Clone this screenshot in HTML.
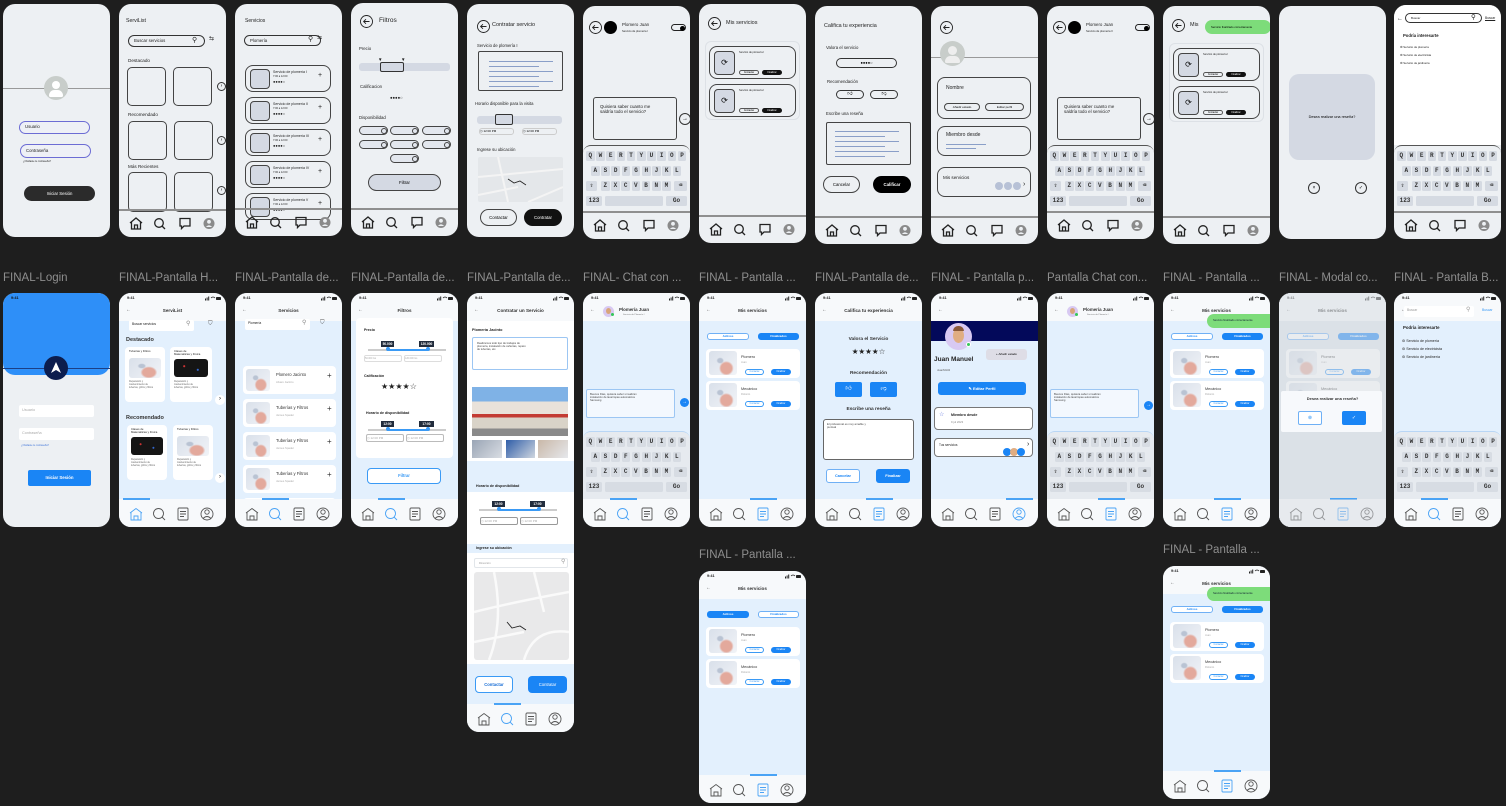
<!DOCTYPE html>
<html><head><meta charset="utf-8">
<style>
html,body{margin:0;padding:0;background:#1e1e1e;width:1506px;height:806px;overflow:hidden;font-family:"Liberation Sans",sans-serif}
.a{position:absolute;box-sizing:border-box;white-space:nowrap}
.fr{position:absolute;overflow:hidden;border-radius:12px;box-sizing:border-box}
.w{background:#edf0f3}
.f{background:#e3f0fd}
.lbl{position:absolute;color:#8e8e8e;font-size:11.5px;white-space:nowrap}
.k{position:absolute;font-family:"Liberation Mono",monospace;font-weight:bold;font-size:6px;color:#333;text-align:center;line-height:10px;height:10px;border-radius:1.5px}
</style></head><body><div id="root"></div>
<script>
function e(x,y,w,h,css,t){return `<div class=a style="left:${x}px;top:${y}px;width:${w}px;height:${h}px;${css||''}">${t||''}</div>`}
function t(x,y,txt,fs,css){return `<div class=a style="left:${x}px;top:${y}px;font-size:${fs}px;line-height:1.15;color:#222;${css||''}">${txt}</div>`}
function c(y,txt,fs,css){return `<div class=a style="left:0;top:${y}px;width:107px;text-align:center;font-size:${fs}px;color:#222;${css||''}">${txt}</div>`}
function frame(x,y,h,cls,inner){return `<div class="fr ${cls}" style="left:${x}px;top:${y}px;width:107px;height:${h}px">${inner}</div>`}
function img(x,y,w,h){return e(x,y,w,h,'border-radius:3px;background:radial-gradient(ellipse at 62% 72%,#e3a99c 0 22%,transparent 30%),radial-gradient(ellipse at 40% 40%,#b9c3d3 0 10%,transparent 16%),linear-gradient(135deg,#d9e0ea,#f1f3f7)')}
function wnav(h){
 let s=`<div class=a style="left:0;top:${h-28}px;width:107px;height:2px;background:#8f8f8f"></div>`;
 s+=`<svg class=a style="left:0;top:${h-23}px" width="107" height="20" viewBox="0 0 107 20" fill="none" stroke="#222" stroke-width="1.3">
 <path d="M11 9 L17 4 L23 9 M12.5 8 V15 H21.5 V8 M15.5 15 V11 H18.5 V15"/>
 <circle cx="40" cy="9" r="4.3"/><path d="M43 12 L46 15"/>
 <path d="M61 4.5 H71 V12 H65 L62.5 14.5 V12 H61 Z"/>
 <circle cx="90" cy="9.5" r="5.5" fill="#8a8a8a" stroke="none"/><circle cx="90" cy="7.8" r="1.9" fill="#edf0f3" stroke="none"/><path d="M86.8 13 Q90 9.5 93.2 13" fill="#edf0f3" stroke="none"/></svg>`;
 return s}
function fnav(h,act){
 let cols=[0,1,2,3].map(i=>i==act?'#4aa3f5':'#555');
 let xs=[17,40,64,88];
 let s=`<div class=a style="left:0;top:${h-28}px;width:107px;height:28px;background:#f7f9fb"></div>`;
 if(act>=0)s+=`<div class=a style="left:${xs[act]-13}px;top:${h-29}px;width:27px;height:2px;background:#4aa3f5"></div>`;
 s+=`<svg class=a style="left:0;top:${h-22}px" width="107" height="18" viewBox="0 0 107 18" fill="none" stroke-width="0.9">
 <path stroke="${cols[0]}" d="M11 8 L17 3.5 L23 8 M12 7.5 V15 H22 V7.5 M15 15 V11 H19 V15"/>
 <circle stroke="${cols[1]}" cx="39.5" cy="8.5" r="5"/><path stroke="${cols[1]}" d="M43 12 L46 15"/>
 <rect stroke="${cols[2]}" x="59" y="3" width="10" height="12" rx="1"/><path stroke="${cols[2]}" d="M61 6.5 H67 M61 9 H67 M61 11.5 H65"/>
 <circle stroke="${cols[3]}" cx="88" cy="9" r="6"/><circle stroke="${cols[3]}" cx="88" cy="7" r="2.2"/><path stroke="${cols[3]}" d="M84 13.5 Q88 9.5 92 13.5"/></svg>`;
 return s}
function kb(y,fin){
 let bg=fin?'#e6eaef':'#edf0f3', kc=fin?'#d7dce3':'#d5dae2';
 let s=e(0,y,107,70,`background:${bg};border-top:1px solid ${fin?'#b9d6f5':'#555'};border-radius:8px 8px 0 0`);
 let r1='QWERTYUIOP',r2='ASDFGHJKL',r3='ZXCVBNM';
 for(let i=0;i<10;i++)s+=`<div class=k style="left:${3+i*10.2}px;top:${y+6}px;width:8.5px;background:${kc}">${r1[i]}</div>`;
 for(let i=0;i<9;i++)s+=`<div class=k style="left:${8+i*10.2}px;top:${y+21}px;width:8.5px;background:${kc}">${r2[i]}</div>`;
 s+=`<div class=k style="left:3px;top:${y+36}px;width:11px;background:${kc}">⇧</div>`;
 for(let i=0;i<7;i++)s+=`<div class=k style="left:${18+i*10.2}px;top:${y+36}px;width:8.5px;background:${kc}">${r3[i]}</div>`;
 s+=`<div class=k style="left:91px;top:${y+36}px;width:13px;background:${kc}">⌫</div>`;
 s+=`<div class=k style="left:3px;top:${y+51}px;width:16px;background:${kc}">123</div>`;
 s+=`<div class=k style="left:22px;top:${y+51}px;width:58px;background:${kc}"></div>`;
 s+=`<div class=k style="left:83px;top:${y+51}px;width:21px;background:${kc}">Go</div>`;
 return s}
function back(x,y){return `<svg class=a style="left:${x}px;top:${y}px" width="13" height="13" viewBox="0 0 13 13" fill="none" stroke="#222" stroke-width="0.9"><circle cx="6.5" cy="6.5" r="6"/><path d="M9.5 6.5 H3.8 M6 4.2 L3.6 6.5 L6 8.8"/></svg>`}
function fhead(title,extra){
 return e(0,0,107,28,'background:#f7f9fb')+t(8,3,'9:41',3.8,'font-weight:bold')+
 `<svg class=a style="left:86px;top:3px" width="16" height="5"><rect x="0" y="2.5" width="1" height="2" fill="#222"/><rect x="1.6" y="1.5" width="1" height="3" fill="#222"/><rect x="3.2" y="0.5" width="1" height="4" fill="#222"/><path d="M6 2 Q8 0 10 2" stroke="#222" fill="none" stroke-width="0.8"/><rect x="11" y="1" width="5" height="3" rx="0.8" fill="#222"/></svg>`+
 t(7,15,'←',5,'color:#555')+(title?c(15,title,4.6,'font-weight:bold;color:#333'):'')+(extra||'')}
let R='';
const G='#222';
// ===== TOP ROW (wireframes) =====
// F1 login
R+=frame(3,4,233,'w',
 e(0,84,107,1,'background:#999')+e(41,72,24,24,'border-radius:50%;background:#c8cdca')+
 e(49,77,8,8,'border-radius:50%;background:#fff')+e(46,86,14,7,'border-radius:7px 7px 2px 2px;background:#fff')+
 e(16,117,71,13,'border:1px solid #6c6cd4;border-radius:7px;background:#eef0f6',t(5,3,'Usuario',4.3))+
 e(17,140,71,14,'border:1px solid #6c6cd4;border-radius:7px;background:#eef0f6',t(5,3.5,'Contraseña',4.3))+
 t(20,157,'¿Olvidaste tu contraseña?',2.4)+
 e(21,182,71,15,'background:#2b2b2b;border-radius:8px;color:#fff;font-size:4.3px;text-align:center;line-height:15px','Iniciar Sesión'));
// F2 home
function circ(x,y){return e(x,y,9,9,'border:1px solid #333;border-radius:50%;font-size:5px;text-align:center;line-height:7px',"›")}
R+=frame(119,4,233,'w',
 t(7,15,'ServiList',5.2)+e(9,31,77,12,'border:1px solid #333;border-radius:7px',t(5,3,'Buscar servicios',4.3)+t(63,1,'⚲',7))+t(90,32,'⇆',6)+
 t(9,54,'Destacado',4.6)+e(8,63,39,39,'border:1px solid #444;border-radius:5px')+e(54,63,39,39,'border:1px solid #444;border-radius:5px')+circ(98,78)+
 t(9,108,'Recomendado',4.6)+e(9,117,39,39,'border:1px solid #444;border-radius:5px')+e(55,117,39,39,'border:1px solid #444;border-radius:5px')+circ(98,132)+
 t(9,160,'Más Recientes',4.6)+e(9,168,39,40,'border:1px solid #444;border-radius:5px')+e(55,168,39,40,'border:1px solid #444;border-radius:5px')+circ(98,182)+
 wnav(233));
// F3 servicios
let f3=t(10,15,'Servicios',5)+e(9,31,77,11,'border:1px solid #333;border-radius:7px',t(5,2.5,'Plomería',4.3)+t(63,0,'⚲',7))+t(82,31,'⇆',6);
['I','II','III','IV','V'].forEach((n,i)=>{let y=61+i*32;f3+=e(10,y,86,27,'border:1px solid #444;border-radius:8px',
 e(4,3,20,20,'background:#d4d9e3;border:1px solid #444;border-radius:4px')+t(27,4,'Servicio de plomería '+n,3.5)+t(27,10,'7:00 a 12:00',2.6)+t(27,14,'●●●●○',4)+t(72,6,'+',7))});
R+=frame(235,4,232,'w',f3+wnav(232));
// F4 filtros
let tg=(x,y)=>e(x,y,29,9,'border:1px solid #444;border-radius:5px;background:#e3e7ee',e(21,1,6,6,'border:1px solid #444;border-radius:50%'));
R+=frame(351,3,233,'w',back(9,12)+t(28,14,'Filtros',6.5)+t(8,44,'Precio',4.3)+e(8,60,91,8,'background:#d4d9e3;border-radius:3px')+
 e(29,59,24,10,'border:1px solid #333;border-radius:2px;background:#d4d9e3')+t(27,54,'▼',4.5)+t(50,54,'▼',4.5)+
 t(9,82,'Calificacion',4.3)+t(39,93,'●●●●○',4.2)+t(8,113,'Disponibilidad',4.3)+
 tg(8,123)+tg(39,123)+tg(71,123)+tg(8,137)+tg(39,137)+tg(71,137)+tg(39,151)+
 e(17,171,73,17,'border:1px solid #444;border-radius:9px;background:#d4d9e3;font-size:4.3px;text-align:center;line-height:15px','Filtrar')+wnav(233));
// F5 contratar
let lines='';for(let i=0;i<6;i++)lines+=e(10,9+i*5,i%2?50:64,1,'background:#8a9fc8');
R+=frame(467,4,233,'w',back(10,16)+t(25,18,'Contratar servicio',5.5)+t(10,40,'Servicio de plomería I',4.2)+
 e(11,47,85,40,'border:1px solid #444;border-radius:2px',lines)+t(8,98,'Horario disponible para la visita',4.2)+
 e(10,112,85,8,'background:#d4d9e3;border-radius:3px')+e(28,110,18,11,'border:1px solid #333;border-radius:2px;background:#d4d9e3')+
 e(12,124,35,7,'border:1px solid #ccc;border-radius:3px;font-size:3px;line-height:5px',' ◷ 12:00 PM')+e(55,124,35,7,'border:1px solid #ccc;border-radius:3px;font-size:3px;line-height:5px',' ◷ 12:00 PM')+
 t(10,144,'Ingrese su ubicación',4.2)+e(11,153,85,45,'background:#e4e7ea;border-radius:2px',`<svg width="85" height="45"><path d="M0 20 L85 12 M20 0 L30 45 M50 45 L85 30 M0 38 L40 30" stroke="#f4f4f4" stroke-width="2" fill="none"/><path d="M30 22 L36 26 L42 24 L48 28" stroke="#222" fill="none" stroke-width="0.8"/></svg>`)+
 e(13,205,37,17,'border:1px solid #444;border-radius:9px;font-size:4.3px;text-align:center;line-height:15px','Contactar')+
 e(57,205,38,17,'background:#111;border-radius:9px;color:#fff;font-size:4.3px;text-align:center;line-height:17px','Contratar'));
// chat wire
function wchat(x,y,sub){return frame(x,y,233,'w',back(6,15)+e(21,15,13,13,'background:#000;border-radius:50%')+t(39,16,'Plomero Juan',4.4)+t(39,24,sub,2.7)+
 e(88,18,15,7,'border:1px solid #222;border-radius:4px',e(8,0.5,5,5,'background:#000;border-radius:50%'))+
 e(10,91,84,43,'border:1px solid #444;border-radius:3px',t(6,6,'Quisiera saber cuanto me<br>saldría todo el servicio?',4.4))+
 e(96,107,12,12,'border:1px solid #333;border-radius:50%;font-size:6px;text-align:center;line-height:10px','→')+kb(139,false)+wnav(233))}
R+=wchat(583,6,'Servicio de plomería I');
R+=wchat(1047,6,'Servicio de plomería II');
// mis servicios wire
function wcard(x,y){return e(x,y,87,33,'border:1px solid #444;border-radius:8px',e(4,4,21,24,'background:#d4d9e3;border:1px solid #444;border-radius:4px;font-size:8px;text-align:center;line-height:22px','⟳')+
 t(29,5,'Servicio de plomería I',2.6)+e(29,23,20,5,'border:1px solid #555;border-radius:3px;font-size:2.4px;text-align:center;line-height:3px','Contactar')+e(52,23,20,5,'background:#111;border-radius:3px;color:#fff;font-size:2.4px;text-align:center;line-height:5px','Finalizar'))}
R+=frame(699,4,239,'w',back(9,13)+t(27,16,'Mis servicios',5.5)+e(6,37,95,79,'border:1px solid #dde1e6;border-radius:6px')+wcard(10,42)+wcard(10,80)+wnav(239));
R+=frame(1163,6,238,'w',back(9,13)+t(27,16,'Mis',5.5)+e(6,37,95,79,'border:1px solid #dde1e6;border-radius:6px')+wcard(10,42)+wcard(10,80)+
 e(42,14,66,14,'background:#7ddc7a;border-radius:7px;font-size:2.8px;line-height:14px;padding-left:6px','Servicio finalizado correctamente')+wnav(238));
// califica wire
let l8='';for(let i=0;i<6;i++)l8+=e(8,8+i*5,i%2?50:64,1,'background:#8a9fc8');
R+=frame(815,6,238,'w',t(9,17,'Califica tu experiencia',5.4)+t(11,40,'Valora el servicio',4.3)+
 e(21,52,61,10,'border:1px solid #333;border-radius:5px;font-size:4px;text-align:center;line-height:8px','●●●●○')+
 t(12,74,'Recomendación',4.3)+e(21,84,28,9,'border:1px solid #333;border-radius:5px;font-size:5px;text-align:center;line-height:7px','👍︎')+e(55,84,28,9,'border:1px solid #333;border-radius:5px;font-size:5px;text-align:center;line-height:7px','👎︎')+
 t(11,106,'Escribe una reseña',4.3)+e(11,116,85,43,'border:1px solid #444;border-radius:2px',l8)+
 e(8,170,37,17,'border:1px solid #444;border-radius:9px;font-size:4.3px;text-align:center;line-height:15px','Cancelar')+
 e(58,170,38,17,'background:#000;border-radius:9px;color:#fff;font-weight:bold;font-size:4.3px;text-align:center;line-height:17px','Calificar')+wnav(238));
// perfil wire
R+=frame(931,6,238,'w',back(9,15)+e(0,51,107,1,'background:#999')+e(9,35,25,25,'border-radius:50%;background:#c8cdca')+e(17,40,9,9,'border-radius:50%;background:#eee')+e(14,50,15,7,'border-radius:7px 7px 2px 2px;background:#eee')+
 e(6,71,94,42,'border:1px solid #444;border-radius:8px',t(8,8,'Nombre',5)+e(6,25,36,8,'border:1px solid #444;border-radius:4px;font-size:3px;text-align:center;line-height:6px','Añadir estado')+e(47,25,39,8,'border:1px solid #444;border-radius:4px;font-size:3px;text-align:center;line-height:6px','Editar perfil'))+
 e(6,120,94,30,'border:1px solid #444;border-radius:8px',t(8,6,'Miembro desde',5)+e(8,17,40,1,'background:#8a9fc8')+e(8,21,30,1,'background:#8a9fc8'))+
 e(6,161,94,30,'border:1px solid #444;border-radius:8px',t(5,7,'Mis servicios',4.6)+e(57,14,8,8,'background:#b7c1d6;border-radius:50%')+e(66,14,8,8,'background:#b7c1d6;border-radius:50%')+e(75,14,8,8,'background:#b7c1d6;border-radius:50%')+t(85,13,'›',7))+wnav(238));
// modal wire
R+=frame(1279,6,233,'w',e(10,68,86,86,'background:#d4d9e3;border-radius:10px;font-size:3.8px;text-align:center;line-height:86px','Desea realizar una reseña?')+
 e(29,176,12,12,'border:1px solid #333;border-radius:50%;font-size:5px;text-align:center;line-height:10px','×')+e(76,176,12,12,'border:1px solid #333;border-radius:50%;font-size:5px;text-align:center;line-height:10px','✓'));
// buscar wire
R+=frame(1394,5,234,'w',e(0,0,107,140,'background:#fff')+t(3,11,'←',6)+e(11,8,77,10,'border:1px solid #333;border-radius:6px',t(5,2.5,'Buscar',3)+t(65,0,'⚲',6.5))+t(91,12,'<u>Buscar</u>',3.3)+
 t(9,29,'Podría interesarte',4.2,'font-weight:bold')+t(6,41,'⚙ Servicio de plomería',2.8)+t(6,49,'⚙ Servicio de electricista',2.8)+t(6,57,'⚙ Servicio de jardinería',2.8)+kb(140,false)+wnav(234));
// ===== LABELS =====
const L=[[3,'FINAL-Login'],[119,'FINAL-Pantalla H...'],[235,'FINAL-Pantalla de...'],[351,'FINAL-Pantalla de...'],[467,'FINAL-Pantalla de...'],[583,'FINAL- Chat con ...'],[699,'FINAL - Pantalla ...'],[815,'FINAL-Pantalla de...'],[931,'FINAL - Pantalla p...'],[1047,'Pantalla Chat con...'],[1163,'FINAL - Pantalla ...'],[1279,'FINAL - Modal co...'],[1394,'FINAL - Pantalla B...']];
L.forEach(l=>R+=`<div class=lbl style="left:${l[0]}px;top:272px">${l[1]}</div>`);
R+=`<div class=lbl style="left:699px;top:549px">FINAL - Pantalla ...</div><div class=lbl style="left:1163px;top:544px">FINAL - Pantalla ...</div>`;
// ===== SECOND ROW (finals) =====
// G1 login
R+=frame(3,293,234,'w',e(0,0,107,82,'background:#2e8ff8;border-radius:0 0 12px 12px')+t(8,3,'9:41',3.8,'font-weight:bold;color:#111')+
 e(0,75,107,1,'background:#1b3f86')+e(41,63,24,24,'background:#0c1d4e;border-radius:50%',`<svg width="24" height="24"><path d="M12 6 L17 17 L12 14 L7 17 Z" fill="#fff"/></svg>`)+
 e(16,112,75,12,'background:#fff;border-radius:2px',t(3,3,'Usuario',3.8,'color:#aaa'))+e(16,135,75,12,'background:#fff;border-radius:2px',t(3,3,'Contraseña',3.8,'color:#aaa'))+
 t(18,152,'¿Olvidaste tu contraseña?',2.4,'color:#3f74d8')+e(25,177,63,16,'background:#1a85f5;border-radius:2px;color:#fff;font-weight:bold;font-size:4.3px;text-align:center;line-height:16px','Iniciar Sesión'));
// G2 home
function dark(x,y,w,h){return e(x,y,w,h,'border-radius:3px;background:radial-gradient(circle at 30% 40%,#c33 0 3%,transparent 5%),radial-gradient(circle at 70% 60%,#36c 0 3%,transparent 5%),#151515')}
function hcard(x,y,w,title,isDark){return e(x,y,w,55,'background:#fff;border-radius:4px',t(4,3,title,2.8)+(isDark?dark(4,12,w-8,18):img(4,11,w-8,20))+
 t(4,34,'Reparación y<br>mantenimiento de<br>tuberías, grifos y filtros',2.4,'color:#666'))}
R+=frame(119,293,234,'f',fhead('ServiList')+e(10,27,65,11,'background:#fff;border-radius:2px',t(3,3,'Buscar servicios',3.3)+t(57,1,'⚲',6,'color:#888'))+t(89,28,'⛉',6,'color:#555')+
 t(7,44,'Destacado',5.5,'font-weight:bold;color:#333')+hcard(6,54,40,'Tuberías y Filtros',0)+hcard(51,54,42,'Clases de<br>Matemáticas y Física',1)+e(96,102,10,10,'background:#fff;border-radius:50%;font-size:6px;text-align:center;line-height:9px','›')+
 t(7,122,'Recomendado',5.5,'font-weight:bold;color:#333')+hcard(8,132,40,'Clases de<br>Matemáticas y Física',1)+hcard(54,132,40,'Tuberías y Filtros',0)+e(96,180,10,10,'background:#fff;border-radius:50%;font-size:6px;text-align:center;line-height:9px','›')+fnav(234,0));
// G3 servicios
let g3=fhead('Servicios')+e(10,26,65,11,'background:#fff;border-radius:2px',t(3,3,'Plomería',3.3)+t(57,1,'⚲',6,'color:#888'))+t(85,27,'⛉',6,'color:#555');
['Plomero Jacinto','Tuberías y Filtros','Tuberías y Filtros','Tuberías y Filtros','Tuberías y Filtros'].forEach((n,i)=>{g3+=e(8,73+i*33,93,28,'background:#fff;border-radius:4px',img(3,3,24,22)+t(33,7,n,4.2,'color:#333')+t(33,15,i?'James Spader':'Alvaro Jacinto',2.8,'color:#aaa')+t(84,5,'+',8,'color:#333'))});
R+=frame(235,293,234,'f',g3+fnav(234,1));
// G4 filtros
function slider(y,a,b){return e(12,y+8,78,1.5,'background:#ccc')+e(31,y+8,41,1.5,'background:#3a9af5')+e(30,y+6,4,4,'background:#3a9af5;border-radius:50%')+e(70,y+6,4,4,'background:#3a9af5;border-radius:50%')+
 e(25,y,13,6,'background:#222c3c;color:#fff;font-size:3.2px;text-align:center;line-height:6px;font-weight:bold',a)+e(63,y,15,6,'background:#222c3c;color:#fff;font-size:3.2px;text-align:center;line-height:6px;font-weight:bold',b)}
R+=frame(351,293,234,'f',fhead('Filtros')+e(5,25,97,140,'background:#fff;border-radius:4px',
 t(8,10,'Precio',3.6,'font-weight:bold')+slider(23,'50.000','120.000')+e(8,37,38,7,'border:1px solid #ddd;border-radius:2px;font-size:2.4px;color:#aaa;line-height:5px',' 50.000 Gs')+e(48,37,38,7,'border:1px solid #ddd;border-radius:2px;font-size:2.4px;color:#aaa;line-height:5px',' 120.000 Gs')+
 t(8,56,'Calificación',3.6,'font-weight:bold')+t(25,64,'★★★★☆',8,'color:#222')+t(10,93,'Horario de disponibilidad',3.6,'font-weight:bold')+
 slider(103,'12:00','17:00')+e(10,116,38,8,'border:1px solid #bbb;border-radius:2px;font-size:3px;color:#aaa;line-height:6px',' ◷ 12:00 PM')+e(50,116,38,8,'border:1px solid #bbb;border-radius:2px;font-size:3px;color:#aaa;line-height:6px',' ◷ 12:00 PM'))+
 e(16,175,74,16,'background:#fff;border:1px solid #3a9af5;border-radius:4px;color:#3a9af5;font-weight:bold;font-size:4.2px;text-align:center;line-height:14px','Filtrar')+fnav(234,1));
// G5 contratar (tall)
R+=frame(467,293,439,'f',fhead('Contratar un Servicio')+e(0,28,107,62,'background:#fff')+t(5,35,'Plomería Jacinto',3.8,'font-weight:bold')+
 e(5,44,96,33,'background:#fff;border:1px solid #9cc6f3;border-radius:2px',t(4,4,'Realizamos todo tipo de trabajos de<br>plomería, instalación de cañerías, reparo<br>de tuberías, etc.',2.7,'color:#444'))+
 e(0,90,107,78,'background:#fff')+e(5,94,96,49,'background:linear-gradient(180deg,#7fb2e6 0 30%,#e9e2da 30% 55%,#c33b33 55% 62%,#d9d3c8 62% 85%,#8a8a8a 85%)')+
 e(5,147,30,18,'background:linear-gradient(135deg,#9aa5b5,#d9dde3)')+e(39,147,29,18,'background:linear-gradient(135deg,#2f5da8,#cfd6df)')+e(71,147,30,18,'background:linear-gradient(135deg,#c9b8a8,#e6e8ec)')+
 t(9,191,'Horario de disponibilidad',3.6,'font-weight:bold')+e(0,199,107,52,'background:#fff')+slider(208,'12:00','17:00')+
 e(13,224,38,8,'border:1px solid #999;border-radius:2px;font-size:3px;color:#aaa;line-height:6px',' ◷ 12:00 PM')+e(53,224,38,8,'border:1px solid #999;border-radius:2px;font-size:3px;color:#aaa;line-height:6px',' ◷ 12:00 PM')+
 t(9,253,'Ingrese su ubicación',3.6,'font-weight:bold')+e(0,260,107,111,'background:#fff')+e(7,265,94,10,'border:1px solid #e2e6ea;border-radius:2px',t(4,2.5,'Dirección',2.8,'color:#999')+t(86,0,'⚲',6,'color:#999'))+
 e(7,279,95,88,'background:#e9e9ea;border-radius:3px',`<svg width="95" height="88"><path d="M0 40 Q40 30 95 20 M20 0 Q30 50 15 88 M50 88 Q60 55 95 60 M0 70 L50 60 M60 0 L70 40" stroke="#fafafa" stroke-width="2.5" fill="none"/><path d="M33 50 L38 56 L46 54 L52 58" stroke="#222" fill="none" stroke-width="0.9"/></svg>`)+
 e(8,383,38,17,'background:#fff;border:1px solid #3a9af5;border-radius:4px;color:#1a6fd6;font-size:4.2px;text-align:center;line-height:15px;font-weight:bold','Contactar')+
 e(61,383,39,17,'background:#1a85f5;border-radius:4px;color:#fff;font-size:4.2px;text-align:center;line-height:17px','Contratar')+fnav(439,1));
// final chat
function fchat(x,y,msgY,sendY,act){return frame(x,y,234,'f',fhead('','')+e(20,13,11,11,'background:#d8c9f2;border-radius:50%',e(3,2,5,6,'background:#d8a57a;border-radius:50%'))+e(28,20,3,3,'background:#35c759;border-radius:50%')+
 t(36,14,'Plomería Juan',4.4,'font-weight:bold;color:#333')+t(40,21,'Servicio de Plomería I',2.2,'color:#777')+
 e(3,msgY,89,29,'background:#f3f8fe;border:1px solid #9cc6f3;border-radius:2px',t(3,3,'Buenos Días, quisiera saber si realizan<br>instalación de lavarropas automaticos<br>Samsung',2.7,'color:#444'))+
 e(97,sendY,9,9,'background:#1a85f5;border-radius:50%;color:#fff;font-size:5px;text-align:center;line-height:9px','→')+kb(138,true)+fnav(234,act))}
R+=fchat(583,293,96,105,1);
R+=fchat(1047,293,96,108,2);
// final mis servicios
function fcard(y,n,s){return e(7,y,94,29,'background:#fff;border-radius:4px',img(3,2,28,24)+t(35,6,n,3.8,'color:#333')+t(35,13,s,2.6,'color:#aaa')+
 e(39,20,19,6,'border:1px solid #3a9af5;border-radius:3px;font-size:2.3px;text-align:center;line-height:4px;color:#3a9af5','Contactar')+e(65,20,20,6,'background:#1a85f5;border-radius:3px;font-size:2.3px;text-align:center;line-height:6px;color:#fff','Finalizar'))}
function tabs(activeFirst){let on='background:#1a85f5;color:#fff;border:1px solid #1a85f5',off='background:#fff;color:#1a85f5;border:1px solid #6fb0f5';
 return e(8,40,42,7,(activeFirst?on:off)+';border-radius:3px;font-size:3px;text-align:center;line-height:5px;font-weight:bold','Activos')+e(59,40,41,7,(activeFirst?off:on)+';border-radius:3px;font-size:3px;text-align:center;line-height:5px;font-weight:bold','Finalizados')}
function fmis(x,y,h,first,toast){return frame(x,y,h,'f',fhead(toast?'Mis servicios':'Mis servicios')+tabs(first)+fcard(56,'Plomero','Juan')+fcard(88,'Mecánico','Roberto')+
 (toast?e(44,21,64,14,'background:#7ddc7a;border-radius:7px 0 0 7px;font-size:2.7px;line-height:14px;padding-left:6px;color:#123','Servicio finalizado correctamente'):'')+fnav(h,2))}
R+=fmis(699,293,234,false,false);
R+=fmis(1163,293,234,false,true);
R+=fmis(699,571,232,true,false);
R+=fmis(1163,566,233,false,true);
// G8 califica
R+=frame(815,293,234,'f',fhead('Califica tu experiencia')+c(44,'Valora el Servicio',4.8,'font-weight:bold;color:#333')+c(54,'★★★★☆',7.5,'color:#222')+
 c(78,'Recomendación',4.8,'font-weight:bold;color:#333')+e(20,89,27,15,'background:#1a85f5;border-radius:2px;color:#fff;font-size:6px;text-align:center;line-height:15px','👍︎')+e(55,89,27,15,'background:#1a85f5;border-radius:2px;color:#fff;font-size:6px;text-align:center;line-height:15px','👎︎')+
 c(114,'Escribe una reseña',4.8,'font-weight:bold;color:#333')+e(8,126,91,41,'background:#fff;border:1px solid #666;border-radius:3px',t(3,3,'El profesional es muy amable y<br>puntual',2.8,'color:#444'))+
 e(11,176,34,14,'background:#fff;border:1px solid #6fb0f5;border-radius:3px;color:#1a85f5;font-size:3.8px;text-align:center;line-height:12px;font-weight:bold','Cancelar')+
 e(61,176,34,14,'background:#1a85f5;border-radius:3px;color:#fff;font-size:3.8px;text-align:center;line-height:14px;font-weight:bold','Finalizar')+fnav(234,2));
// G9 perfil
R+=frame(931,293,234,'f',fhead('')+e(0,28,107,20,'background:#03095a')+e(14,30,27,27,'background:#d8c9f2;border-radius:50%',e(8,5,11,15,'background:#e0ad82;border-radius:50%')+e(8,3,11,5,'background:#8a5a3a;border-radius:5px 5px 0 0'))+e(35,49,5,5,'background:#35c759;border-radius:50%;border:1px solid #fff')+
 e(55,56,41,11,'background:#dedde6;border-radius:3px;font-size:3px;text-align:center;line-height:11px','+ Añadir estado')+t(3,63,'Juan Manuel',6.5,'font-weight:bold;color:#222')+t(6,76,'JuanM134',2.8,'color:#555')+
 e(7,89,88,13,'background:#1a85f5;border-radius:3px;color:#fff;font-size:4px;text-align:center;line-height:13px;font-weight:bold','✎ Editar Perfil')+
 e(3,114,99,23,'background:#fff;border:1px solid #777;border-radius:4px',t(4,4,'☆',6,'color:#6b7de0')+t(16,5,'Miembro desde',3.6,'font-weight:bold')+t(16,13,'9 jul 2023',2.8,'color:#888'))+
 e(3,145,99,19,'background:#fff;border:1px solid #777;border-radius:4px',t(4,5,'Tus servicios',3.2)+e(68,9,8,8,'background:#1a85f5;border-radius:50%')+e(75,9,8,8,'background:#e0ad82;border-radius:50%')+e(82,9,8,8,'background:#1a85f5;border-radius:50%')+t(92,2,'›',7))+fnav(234,3));
// G12 modal
R+=frame(1279,293,234,'f',`<div style="position:absolute;inset:0;background:#dfe6ee"></div>`+fhead('Mis servicios')+tabs(false)+fcard(56,'Plomero','Juan')+fcard(88,'Mecánico','Roberto')+
 `<div style="position:absolute;inset:0;background:rgba(215,220,226,0.55)"></div>`+
 e(2,98,101,41,'background:#f7f9fc;border-radius:2px',c(5,'Desea realizar una reseña?',4,'font-weight:bold;color:#333;left:-2px')+
 e(17,20,24,14,'background:#fff;border:1px solid #6fb0f5;border-radius:2px;color:#3a9af5;font-size:5px;text-align:center;line-height:12px','⊗')+
 e(61,20,24,14,'background:#1a85f5;border-radius:2px;color:#fff;font-size:5px;text-align:center;line-height:14px','✓'))+fnav(234,2)+
 `<div style="position:absolute;left:0;top:206px;width:107px;height:28px;background:rgba(215,220,226,0.5)"></div>`);
// G13 buscar
R+=frame(1394,293,234,'f',fhead('')+e(10,13,70,11,'background:#fff;border-radius:2px',t(3,3,'Buscar',3.3,'color:#999')+t(62,1,'⚲',6,'color:#999'))+t(88,16,'Buscar',3.4,'color:#3a9af5')+
 t(9,33,'Podría interesarte',4.3,'font-weight:bold')+t(8,46,'⚙ Servicio de plomería',3.6)+t(8,54,'⚙ Servicio de electricista',3.6)+t(8,62,'⚙ Servicio de jardinería',3.6)+kb(138,true)+fnav(234,1));
document.getElementById('root').innerHTML=R;
</script></body></html>
